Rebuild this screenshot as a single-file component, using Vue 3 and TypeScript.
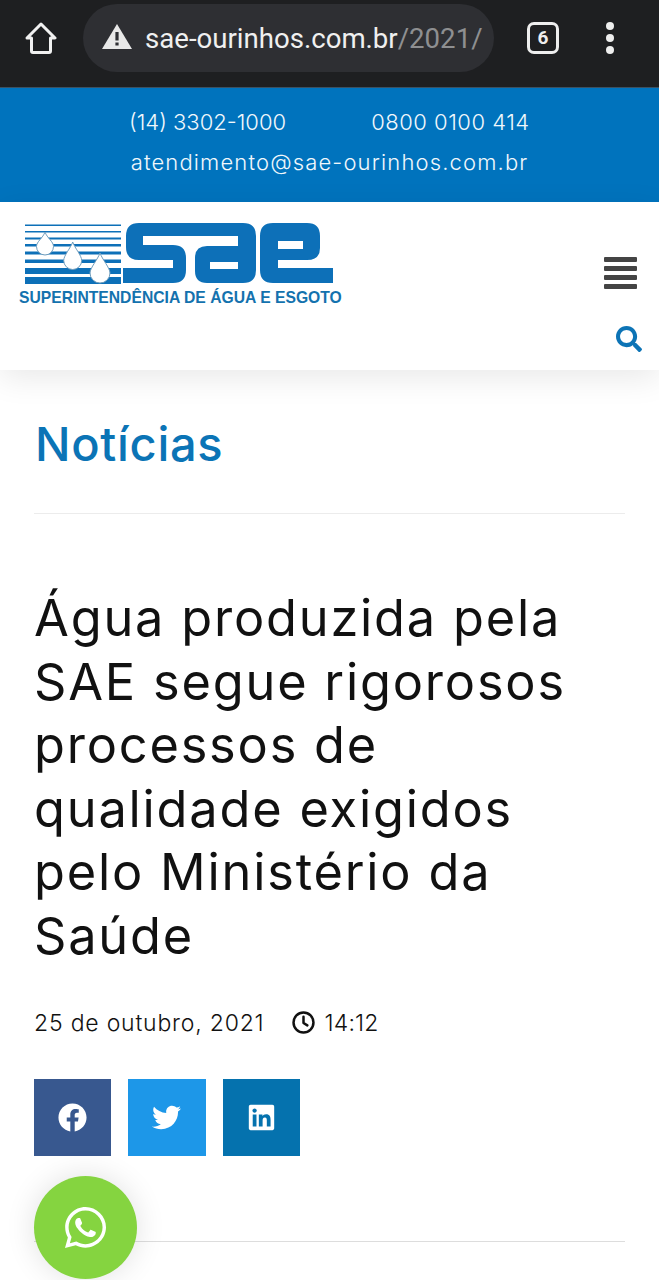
<template>
  <div class="page">
    <div class="browser-bar">
      <svg class="home-icon" viewBox="0 0 32 34" fill="none" stroke="#f1f1f1" stroke-width="3" stroke-linejoin="round">
        <path d="M16 3 L30 17 H25.5 V30 Q25.5 31.5 24 31.5 H8 Q6.5 31.5 6.5 30 V17 H2 Z" />
      </svg>
      <div class="address">
        <svg class="warn-icon" viewBox="0 0 30 25">
          <path d="M15 0 L30 25 H0 Z" fill="#e8e8e8" />
          <rect x="13.4" y="8" width="3.2" height="8.5" fill="#2e2f33" />
          <rect x="13.4" y="18.5" width="3.2" height="3" fill="#2e2f33" />
        </svg>
        <span class="url">sae-ourinhos.com.br<span class="url-path">/2021/</span></span>
      </div>
      <div class="tabs">6</div>
      <div class="dots"><i></i><i></i><i></i></div>
    </div>

    <div class="contact-bar">
      <div class="phones">
        <span>(14) 3302-1000</span>
        <span class="phone-free">0800 0100 414</span>
      </div>
      <div class="email">atendimento@sae-ourinhos.com.br</div>
    </div>

    <header class="site-header">
      <div class="logo">
        <svg class="logo-mark" viewBox="20 220 320 66">
          <g fill="#0d70b8">
            <rect v-for="s in stripes" :key="s.y" x="25" :y="s.y" width="96" :height="s.h" />
            <path fill-rule="evenodd" d="M139 223 H243 Q256 223 256 236 V270 Q256 283 243 283 H207 Q195 283 195 271 V258 Q195 246 207 246 H238 V236 H143 V245 H173 Q186 245 186 258 V270 Q186 283 173 283 H123 V268 H173 V260 H139 Q126 260 126 247 V236 Q126 223 139 223 Z M210 262 H238 V269 H210 Z" />
            <path fill-rule="evenodd" d="M273 223 H307 Q320 223 320 236 V248 Q320 260 307 260 H278 V268 H333 V283 H273 Q260 283 260 270 V236 Q260 223 273 223 Z M278 241 H303 V249 H278 Z" />
          </g>
          <g fill="#fff" stroke="#6f9dbd" stroke-width="1">
            <path v-for="d in drops" :key="d" :d="d" />
          </g>
        </svg>
        <div class="logo-text">SUPERINTENDÊNCIA DE ÁGUA E ESGOTO</div>
      </div>
      <div class="header-actions">
        <div class="burger"><i></i><i></i><i></i><i></i></div>
        <svg class="search" viewBox="0 0 512 512">
          <path fill="#0d74b6" d="M505 442.7L405.3 343c-4.5-4.5-10.6-7-17-7H372c27.6-35.3 44-79.7 44-128C416 93.1 322.9 0 208 0S0 93.1 0 208s93.1 208 208 208c48.3 0 92.7-16.4 128-44v16.3c0 6.4 2.5 12.5 7 17l99.7 99.7c9.4 9.4 24.6 9.4 33.9 0l28.3-28.3c9.4-9.4 9.4-24.6.1-34zM208 336c-70.7 0-128-57.2-128-128 0-70.7 57.2-128 128-128 70.7 0 128 57.2 128 128 0 70.7-57.2 128-128 128z" />
        </svg>
      </div>
    </header>

    <main class="content">
      <h2 class="section-title">Notícias</h2>
      <h1 class="post-title">Água produzida pela SAE segue rigorosos processos de qualidade exigidos pelo Ministério da Saúde</h1>
      <div class="meta">
        <span>25 de outubro, 2021</span>
        <span class="time">
          <svg viewBox="0 0 24 24" fill="none" stroke="#111" stroke-width="2.6" stroke-linecap="round" stroke-linejoin="round">
            <circle cx="12" cy="12" r="10.4" />
            <path d="M12 6 V12.5 L16 15" />
          </svg>
          14:12
        </span>
      </div>
      <div class="share">
        <a v-for="b in shareButtons" :key="b.name" class="share-btn" :class="b.name">
          <svg :viewBox="b.viewBox"><path fill="#fff" :d="b.path" /></svg>
        </a>
      </div>
      <hr class="bottom-rule" />
    </main>

    <a class="whatsapp">
      <svg viewBox="0 0 448 512">
        <path fill="#fff" d="M380.9 97.1C339 55.1 283.2 32 223.9 32c-122.4 0-222 99.6-222 222 0 39.1 10.2 77.3 29.6 111L0 480l117.7-30.9c32.4 17.7 68.9 27 106.1 27h.1c122.3 0 224.1-99.6 224.1-222 0-59.3-25.2-115-67.1-157zm-157 341.6c-33.2 0-65.7-8.9-94-25.7l-6.7-4-69.8 18.3L72 359.2l-4.4-7c-18.5-29.4-28.2-63.3-28.2-98.2 0-101.7 82.8-184.5 184.6-184.5 49.3 0 95.6 19.2 130.4 54.1 34.8 34.9 56.2 81.2 56.1 130.5 0 101.8-84.9 184.6-186.6 184.6zm101.2-138.2c-5.5-2.8-32.8-16.2-37.9-18-5.1-1.9-8.8-2.8-12.5 2.8-3.7 5.6-14.3 18-17.6 21.8-3.2 3.7-6.5 4.2-12 1.4-32.6-16.3-54-29.1-75.5-66-5.7-9.8 5.7-9.1 16.3-30.3 1.8-3.7.9-6.9-.5-9.7-1.4-2.8-12.5-30.1-17.1-41.2-4.5-10.8-9.1-9.3-12.5-9.5-3.2-.2-6.9-.2-10.6-.2-3.7 0-9.7 1.4-14.8 6.9-5.1 5.6-19.4 19-19.4 46.3 0 27.3 19.9 53.7 22.6 57.4 2.8 3.7 39.1 59.7 94.8 83.8 35.2 15.2 49 16.5 66.6 13.9 10.7-1.6 32.8-13.4 37.4-26.4 4.6-13 4.6-24.1 3.2-26.4-1.3-2.5-5-3.9-10.5-6.6z" />
      </svg>
    </a>
  </div>
</template>

<script setup lang="ts">
interface Stripe {
  y: number
  h: number
}

interface ShareButton {
  name: string
  viewBox: string
  path: string
}

const stripes: Stripe[] = [
  { y: 224.5, h: 1.5 },
  { y: 231, h: 1.5 },
  { y: 237.5, h: 2 },
  { y: 244, h: 2.5 },
  { y: 251.5, h: 3 },
  { y: 259.5, h: 3.5 },
  { y: 268, h: 6 },
  { y: 277, h: 7 }
]

// gota: ponta em (x, top), base redonda de raio r terminando em bottom
const dropAt = (x: number, top: number, bottom: number, r: number) => {
  const cy = bottom - r
  return `M${x} ${top} C${x + 2} ${top + 6} ${x + r} ${cy - 5} ${x + r} ${cy} A${r} ${r} 0 0 1 ${x - r} ${cy} C${x - r} ${cy - 5} ${x - 2} ${top + 6} ${x} ${top}Z`
}

const drops: string[] = [dropAt(45, 232, 255, 8.5), dropAt(72.7, 242, 269.5, 9), dropAt(100, 253, 283, 10)]

const shareButtons: ShareButton[] = [
  {
    name: 'facebook',
    viewBox: '0 0 512 512',
    path: 'M504 256C504 119 393 8 256 8S8 119 8 256c0 123.78 90.69 226.38 209.25 245V327.69h-63V256h63v-54.64c0-62.15 37-96.48 93.67-96.48 27.14 0 55.52 4.84 55.52 4.84v61h-31.28c-30.8 0-40.41 19.12-40.41 38.73V256h68.78l-11 71.69h-57.78V501C413.31 482.38 504 379.78 504 256z'
  },
  {
    name: 'twitter',
    viewBox: '0 0 512 512',
    path: 'M459.37 151.716c.325 4.548.325 9.097.325 13.645 0 138.72-105.583 298.558-298.558 298.558-59.452 0-114.68-17.219-161.137-47.106 8.447.974 16.568 1.299 25.34 1.299 49.055 0 94.213-16.568 130.274-44.832-46.132-.975-84.792-31.188-98.112-72.772 6.498.974 12.995 1.624 19.818 1.624 9.421 0 18.843-1.3 27.614-3.573-48.081-9.747-84.143-51.98-84.143-102.985v-1.299c13.969 7.797 30.214 12.67 47.431 13.319-28.264-18.843-46.781-51.005-46.781-87.391 0-19.492 5.197-37.36 14.294-52.954 51.655 63.675 129.3 105.258 216.365 109.807-1.624-7.797-2.599-15.918-2.599-24.04 0-57.828 46.782-104.934 104.934-104.934 30.213 0 57.502 12.67 76.67 33.137 23.715-4.548 46.456-13.32 66.599-25.34-7.798 24.366-24.366 44.833-46.132 57.827 21.117-2.273 41.584-8.122 60.426-16.243-14.292 20.791-32.161 39.308-52.628 54.253z'
  },
  {
    name: 'linkedin',
    viewBox: '0 0 448 512',
    path: 'M416 32H31.9C14.3 32 0 46.5 0 64.3v383.4C0 465.5 14.3 480 31.9 480H416c17.6 0 32-14.5 32-32.3V64.3c0-17.8-14.4-32.3-32-32.3zM135.4 416H69V202.2h66.5V416zm-33.2-243c-21.3 0-38.5-17.3-38.5-38.5S80.9 96 102.2 96c21.2 0 38.5 17.3 38.5 38.5 0 21.3-17.2 38.5-38.5 38.5zm282.1 243h-66.4V312c0-24.8-.5-56.7-34.5-56.7-34.6 0-39.9 27-39.9 54.9V416h-66.4V202.2h63.7v29.2h.9c8.9-16.8 30.6-34.5 62.9-34.5 67.2 0 79.7 44.3 79.7 101.9V416z'
  }
]
</script>

<style>
html,
body {
  margin: 0;
  background: #fff;
}
</style>

<style scoped>
.page {
  position: relative;
  width: 659px;
  height: 1280px;
  overflow: hidden;
  background: #fff;
  font-family: Inter, "Noto Sans", sans-serif;
  color: #111;
}

.browser-bar {
  display: flex;
  align-items: center;
  height: 76px;
  padding-bottom: 11px;
  background: #1e1f21;
  border-bottom: 1px solid #3c5162;
}

.home-icon {
  width: 32px;
  height: 34px;
  margin-left: 25px;
}

.address {
  display: flex;
  align-items: center;
  width: 411px;
  height: 68px;
  margin-left: 26px;
  padding-left: 19px;
  box-sizing: border-box;
  background: #2e2f33;
  border-radius: 34px;
}

.warn-icon {
  width: 30px;
  height: 25px;
  margin-bottom: 3px;
}

.url {
  margin-left: 13px;
  font-family: Roboto, sans-serif;
  font-size: 27.6px;
  color: #f0f0f0;
  white-space: nowrap;
}

.url-path {
  color: #8e8f91;
}

.tabs {
  width: 26px;
  height: 26px;
  margin-left: 33px;
  border: 3px solid #eee;
  border-radius: 7px;
  color: #eee;
  font-family: Roboto, sans-serif;
  font-weight: 700;
  font-size: 19px;
  line-height: 26px;
  text-align: center;
}

.dots {
  display: flex;
  flex-direction: column;
  gap: 4px;
  margin-left: 47px;
}

.dots i {
  width: 8px;
  height: 8px;
  border-radius: 50%;
  background: #eee;
}

.contact-bar {
  height: 114px;
  background: #0073bd;
  color: #f1f8fc;
  font-size: 22px;
  font-weight: 300;
}

.phones {
  display: flex;
  gap: 85px;
  padding: 20px 0 0 129px;
  line-height: 28px;
}

.phone-free {
  letter-spacing: 0.5px;
}

.email {
  padding-top: 12px;
  line-height: 28px;
  letter-spacing: 1.15px;
  text-align: center;
}

.site-header {
  position: relative;
  display: flex;
  justify-content: space-between;
  height: 168px;
  background: #fff;
  box-shadow: 0 8px 30px rgba(0, 0, 0, 0.09);
}

.logo {
  margin: 18px 0 0 20px;
}

.logo-mark {
  display: block;
  width: 320px;
  height: 66px;
}

.logo-text {
  margin: 3px 0 0 -1px;
  font-family: "Liberation Sans", Arial, sans-serif;
  font-size: 15.7px;
  font-weight: 700;
  color: #1472ae;
  white-space: nowrap;
}

.header-actions {
  display: flex;
  flex-direction: column;
  align-items: flex-end;
  padding: 55px 17px 0 0;
}

.burger {
  display: flex;
  flex-direction: column;
  gap: 4px;
  margin-right: 5px;
}

.burger i {
  width: 33px;
  height: 5px;
  border-radius: 1px;
  background: #444;
}

.search {
  width: 26px;
  height: 26px;
  margin-top: 37px;
}

.content {
  padding: 0 34px;
}

.section-title {
  margin: 0;
  padding: 43px 0 38px 1px;
  border-bottom: 1px solid #ececec;
  font-size: 47px;
  line-height: 62px;
  font-weight: 500;
  letter-spacing: 0.7px;
  color: #0b74b6;
}

.post-title {
  margin: 72px 0 0;
  font-size: 50.5px;
  line-height: 63.6px;
  font-weight: 400;
  letter-spacing: 1.8px;
  color: #111;
}

.meta {
  display: flex;
  gap: 28px;
  margin-top: 39px;
  font-size: 23px;
  font-weight: 300;
  letter-spacing: 0.8px;
  line-height: 32px;
}

.time {
  display: flex;
  align-items: center;
  gap: 9px;
  letter-spacing: 0.2px;
}

.time svg {
  width: 23px;
  height: 23px;
}

.share {
  display: flex;
  gap: 17px;
  margin-top: 40px;
}

.share-btn {
  display: flex;
  align-items: center;
  justify-content: center;
  width: 77.3px;
  height: 77px;
}

.share-btn svg {
  width: 29px;
  height: 29px;
}

.facebook {
  background: #38588f;
}

.twitter {
  background: #1d97e8;
}

.linkedin {
  background: #0572ae;
}

.bottom-rule {
  margin: 85px 0 0;
  border: 0;
  border-top: 1px solid #ddd;
}

.whatsapp {
  position: absolute;
  left: 34px;
  top: 1176px;
  display: flex;
  align-items: center;
  justify-content: center;
  width: 103px;
  height: 103px;
  border-radius: 50%;
  background: #85d440;
  box-shadow: 0 0 30px rgba(0, 0, 0, 0.12);
}

.whatsapp svg {
  width: 41px;
  height: 47px;
}
</style>
